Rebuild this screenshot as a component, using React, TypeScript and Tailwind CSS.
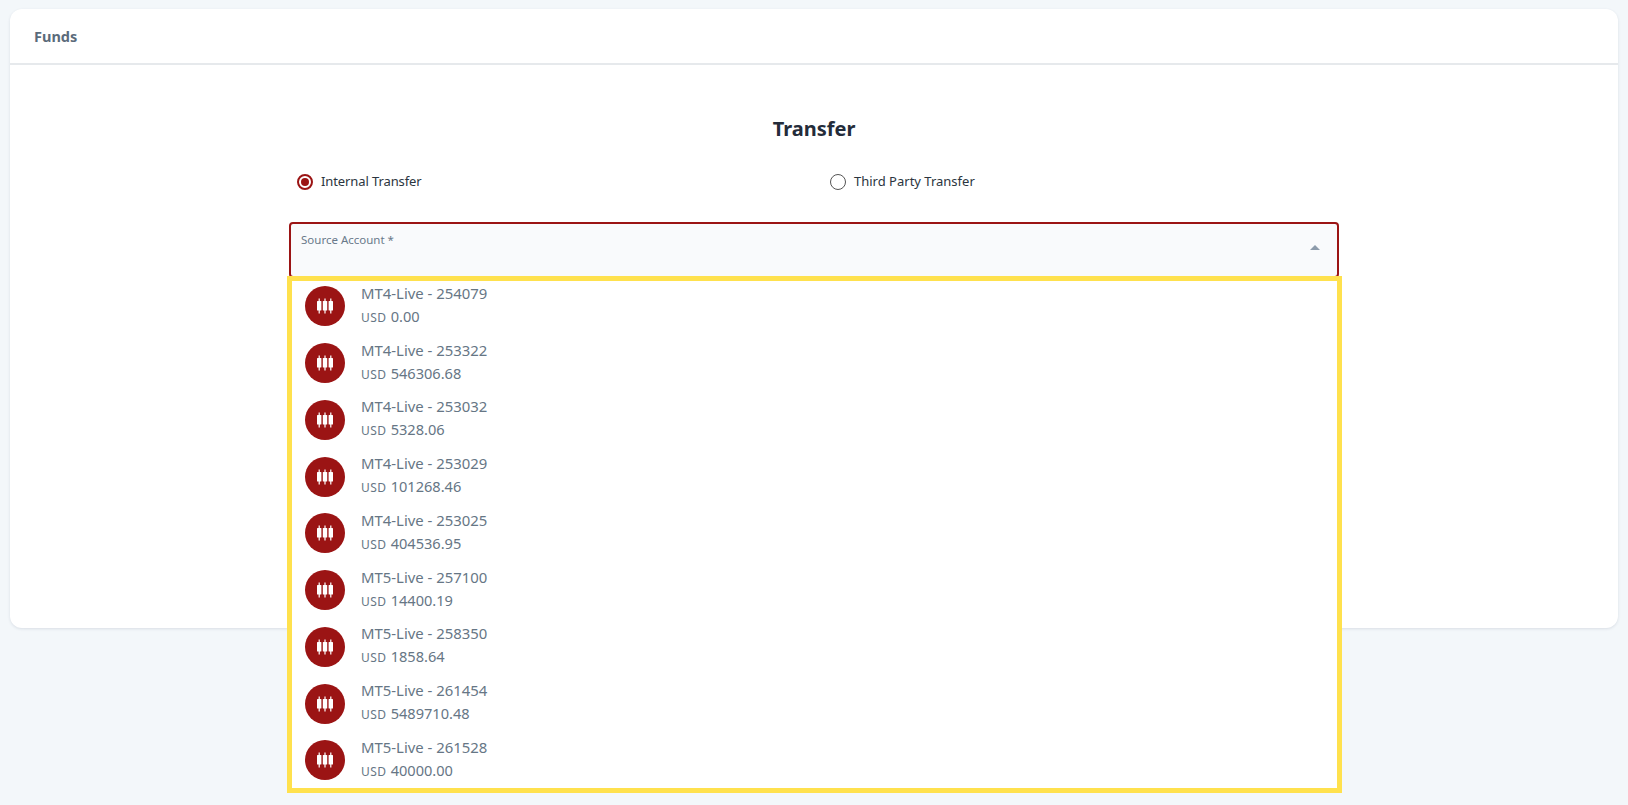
const accounts = [
  ["MT4-Live - 254079", "0.00"],
  ["MT4-Live - 253322", "546306.68"],
  ["MT4-Live - 253032", "5328.06"],
  ["MT4-Live - 253029", "101268.46"],
  ["MT4-Live - 253025", "404536.95"],
  ["MT5-Live - 257100", "14400.19"],
  ["MT5-Live - 258350", "1858.64"],
  ["MT5-Live - 261454", "5489710.48"],
  ["MT5-Live - 261528", "40000.00"],
];

function Candles() {
  return (
    <svg width="18" height="18" viewBox="0 0 18 18" fill="#fff">
      <rect x="1" y="4" width="4.4" height="9.5" rx="0.5" />
      <rect x="2.6" y="1.5" width="1.2" height="15" />
      <rect x="6.8" y="4" width="4.4" height="9.5" rx="0.5" />
      <rect x="8.4" y="1.5" width="1.2" height="15" />
      <rect x="12.6" y="4" width="4.4" height="9.5" rx="0.5" />
      <rect x="14.2" y="1.5" width="1.2" height="15" />
    </svg>
  );
}

export default function App() {
  return (
    <div className="h-[805px] overflow-hidden bg-[#f3f7fa] pt-[9px] px-[10px] font-['Noto_Sans','Open_Sans',sans-serif]">
      <div className="h-[619px] rounded-xl bg-white shadow-[0_1px_3px_rgba(30,50,80,0.12)]">
        <div className="h-[56px] flex items-center pl-[24px] pt-[2px] border-b-2 border-[#e6e9ec] text-[14.5px] font-bold text-[#5b6b7b]">
          Funds
        </div>
        <div className="w-[1050px] ml-[279px]">
          <h1 className="mt-[50px] text-center text-[20px] leading-[28px] font-bold text-[#242c3a]">Transfer</h1>
          <div className="mt-[25px] h-[28px] flex items-center text-[13px] text-[#2b3540]">
            <div className="w-[541px] flex items-center pl-[8px] gap-[8px]">
              <span className="w-[16px] h-[16px] rounded-full border-2 border-[#9b1414] flex items-center justify-center">
                <span className="w-[8px] h-[8px] rounded-full bg-[#9b1414]" />
              </span>
              <span className="tracking-[-0.1px]">Internal Transfer</span>
            </div>
            <div className="flex items-center gap-[8px]">
              <span className="w-[16px] h-[16px] rounded-full border border-[#555]" />
              Third Party Transfer
            </div>
          </div>
          <div className="relative mt-[26px]">
            <div className="relative h-[56px] rounded-[4px] border-2 border-[#9b1414] bg-[#f9fafc] pl-[10px] pt-[8px] text-[11.5px] leading-[15px] text-[#69798a]">
              Source Account *
              <span className="absolute right-[17px] top-[21px] w-0 h-0 border-x-[5px] border-x-transparent border-b-[5px] border-b-[#8d9bab]" />
            </div>
            <div className="absolute left-[-2px] top-[54px] w-[1055px] h-[517px] border-[5px] border-[#ffe14d] bg-white overflow-hidden">
              <div className="-mt-[3px]">
                {accounts.map(([name, amount]) => (
                  <div key={name} className="h-[56.75px] flex items-center pl-[13px] gap-[16px] text-[#667685]">
                    <span className="w-[40px] h-[40px] rounded-full bg-[#9b1414] flex items-center justify-center shrink-0">
                      <Candles />
                    </span>
                    <div className="-mt-[2px]">
                      <div className="text-[14.9px] leading-[23px]">{name}</div>
                      <div className="text-[14.6px] leading-[23px]">
                        <span className="text-[12px] tracking-[0.5px] mr-[4px]">USD</span>
                        {amount}
                      </div>
                    </div>
                  </div>
                ))}
              </div>
            </div>
          </div>
        </div>
      </div>
    </div>
  );
}
